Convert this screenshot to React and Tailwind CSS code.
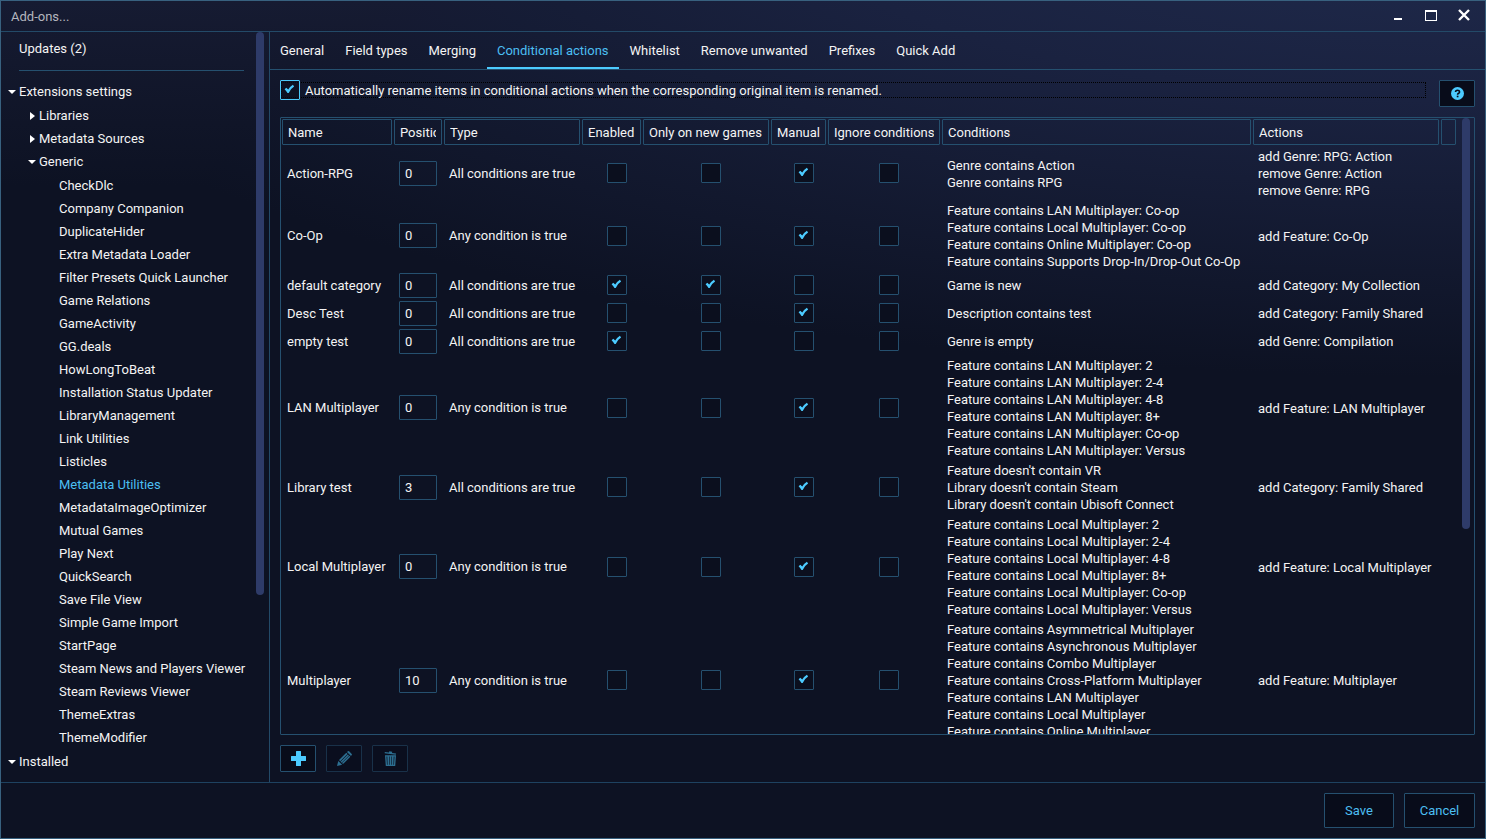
import React from "react";

const extensions = [
  "CheckDlc",
  "Company Companion",
  "DuplicateHider",
  "Extra Metadata Loader",
  "Filter Presets Quick Launcher",
  "Game Relations",
  "GameActivity",
  "GG.deals",
  "HowLongToBeat",
  "Installation Status Updater",
  "LibraryManagement",
  "Link Utilities",
  "Listicles",
  "Metadata Utilities",
  "MetadataImageOptimizer",
  "Mutual Games",
  "Play Next",
  "QuickSearch",
  "Save File View",
  "Simple Game Import",
  "StartPage",
  "Steam News and Players Viewer",
  "Steam Reviews Viewer",
  "ThemeExtras",
  "ThemeModifier",
];

const tabs = [
  "General",
  "Field types",
  "Merging",
  "Conditional actions",
  "Whitelist",
  "Remove unwanted",
  "Prefixes",
  "Quick Add",
];

const headers = [
  "Name",
  "Position",
  "Type",
  "Enabled",
  "Only on new games",
  "Manual",
  "Ignore conditions",
  "Conditions",
  "Actions",
  "",
];

const flagNames = ["Enabled", "Only on new games", "Manual", "Ignore conditions"];

const ALL = "All conditions are true";
const ANY = "Any condition is true";

const rows = [
  {
    name: "Action-RPG",
    position: 0,
    type: ALL,
    flags: [false, false, true, false],
    conditions: ["Genre contains Action", "Genre contains RPG"],
    actions: ["add Genre: RPG: Action", "remove Genre: Action", "remove Genre: RPG"],
  },
  {
    name: "Co-Op",
    position: 0,
    type: ANY,
    flags: [false, false, true, false],
    conditions: [
      "Feature contains LAN Multiplayer: Co-op",
      "Feature contains Local Multiplayer: Co-op",
      "Feature contains Online Multiplayer: Co-op",
      "Feature contains Supports Drop-In/Drop-Out Co-Op",
    ],
    actions: ["add Feature: Co-Op"],
  },
  {
    name: "default category",
    position: 0,
    type: ALL,
    flags: [true, true, false, false],
    conditions: ["Game is new"],
    actions: ["add Category: My Collection"],
  },
  {
    name: "Desc Test",
    position: 0,
    type: ALL,
    flags: [false, false, true, false],
    conditions: ["Description contains test"],
    actions: ["add Category: Family Shared"],
  },
  {
    name: "empty test",
    position: 0,
    type: ALL,
    flags: [true, false, false, false],
    conditions: ["Genre is empty"],
    actions: ["add Genre: Compilation"],
  },
  {
    name: "LAN Multiplayer",
    position: 0,
    type: ANY,
    flags: [false, false, true, false],
    conditions: [
      "Feature contains LAN Multiplayer: 2",
      "Feature contains LAN Multiplayer: 2-4",
      "Feature contains LAN Multiplayer: 4-8",
      "Feature contains LAN Multiplayer: 8+",
      "Feature contains LAN Multiplayer: Co-op",
      "Feature contains LAN Multiplayer: Versus",
    ],
    actions: ["add Feature: LAN Multiplayer"],
  },
  {
    name: "Library test",
    position: 3,
    type: ALL,
    flags: [false, false, true, false],
    conditions: [
      "Feature doesn't contain VR",
      "Library doesn't contain Steam",
      "Library doesn't contain Ubisoft Connect",
    ],
    actions: ["add Category: Family Shared"],
  },
  {
    name: "Local Multiplayer",
    position: 0,
    type: ANY,
    flags: [false, false, true, false],
    conditions: [
      "Feature contains Local Multiplayer: 2",
      "Feature contains Local Multiplayer: 2-4",
      "Feature contains Local Multiplayer: 4-8",
      "Feature contains Local Multiplayer: 8+",
      "Feature contains Local Multiplayer: Co-op",
      "Feature contains Local Multiplayer: Versus",
    ],
    actions: ["add Feature: Local Multiplayer"],
  },
  {
    name: "Multiplayer",
    position: 10,
    type: ANY,
    flags: [false, false, true, false],
    conditions: [
      "Feature contains Asymmetrical Multiplayer",
      "Feature contains Asynchronous Multiplayer",
      "Feature contains Combo Multiplayer",
      "Feature contains Cross-Platform Multiplayer",
      "Feature contains LAN Multiplayer",
      "Feature contains Local Multiplayer",
      "Feature contains Online Multiplayer",
    ],
    actions: ["add Feature: Multiplayer"],
  },
];

function Check({ bright, ...props }) {
  return (
    <span className="relative block size-5 shrink-0">
      <input
        type="checkbox"
        className={
          "peer block size-5 appearance-none rounded-[1px] border " +
          (bright ? "border-[#4cc9fa] bg-[#0b0f1e]/60" : "border-[#25506f] bg-[#0b0f1e]")
        }
        {...props}
      />
      <svg
        viewBox="0 0 20 20"
        className="pointer-events-none absolute inset-0 hidden size-5 fill-[#4ccbff] peer-checked:block"
        aria-hidden="true"
      >
        <path d="M4.6 9.200 6.300 7.700 8.200 9.600Q10.200 6.300 12.900 4.700L14.100 6.600Q10.700 8.700 8.700 12.900L7.500 13Q6.200 10.900 4.600 9.200Z" />
      </svg>
    </span>
  );
}

function Arrow({ open }) {
  return open ? (
    <svg viewBox="0 0 8 4" className="mt-px ml-px h-1 w-2 fill-white" aria-hidden="true">
      <path d="M0 0h8L4 4z" />
    </svg>
  ) : (
    <svg viewBox="0 0 5 8" className="ml-[3px] h-2 w-[5px] fill-white" aria-hidden="true">
      <path d="M0 0 5 4 0 8z" />
    </svg>
  );
}

function Branch({ open, children }) {
  return (
    <button type="button" aria-expanded={open} className="flex h-[23px] items-center text-left">
      <span className="flex w-3 justify-start">
        <Arrow open={open} />
      </span>
      {children}
    </button>
  );
}

function ToolButton({ label, disabled, children }) {
  return (
    <button
      type="button"
      aria-label={label}
      disabled={disabled}
      className="flex h-[27px] w-9 shrink-0 items-center justify-center rounded-[1px] border border-[#25506f] bg-[#080c1a] text-[#4ccbff] disabled:opacity-50"
    >
      {children}
    </button>
  );
}

export default function App() {
  return (
    <div className="flex h-screen flex-col border border-[#38617f] bg-[#0d1223] bg-[radial-gradient(ellipse_110%_60%_at_100%_-15%,#212d50_0%,#1a2240_45%,#0d1223_100%),linear-gradient(#161b32,#0d1223_22%)] bg-blend-lighten font-['Roboto','Noto_Sans',sans-serif] text-[13px] leading-[17px] text-[#f4f4f4]">
      <header className="flex h-[31px] shrink-0 items-center border-b border-[#234a68] pr-[15px] pl-[10px]">
        <h1 className="flex-1 text-[#b4b6be]">Add-ons...</h1>
        <div className="flex items-center gap-[21px] pb-[2px]">
          <button type="button" aria-label="Minimize">
            <svg viewBox="0 0 12 12" className="size-3 fill-white" aria-hidden="true">
              <path d="M2 9h8v2H2z" />
            </svg>
          </button>
          <button type="button" aria-label="Maximize">
            <svg viewBox="0 0 12 12" className="size-3 fill-white" aria-hidden="true">
              <path fillRule="evenodd" d="M0 1h12v11H0zM1 3v8h10V3z" />
            </svg>
          </button>
          <button type="button" aria-label="Close">
            <svg viewBox="0 0 12 12" className="size-3 stroke-white" aria-hidden="true">
              <path d="M1 1l10 10M11 1 1 11" strokeWidth="2.4" fill="none" />
            </svg>
          </button>
        </div>
      </header>

      <div className="flex min-h-0 flex-1">
        <aside className="flex w-[269px] shrink-0 border-r border-[#234a68]">
          <nav aria-label="Add-ons" className="flex min-w-0 flex-1 flex-col overflow-hidden">
            <a href="#updates" className="mt-2 ml-[18px]">
              Updates (2)
            </a>
            <hr className="mt-[13px] mr-3 ml-[18px] border-[#25506f]" />
            <div className="mt-[9px] flex flex-col gap-px pl-[6px]">
              <Branch open>Extensions settings</Branch>
              <div className="flex flex-col pl-5">
                <Branch open={false}>Libraries</Branch>
                <Branch open={false}>Metadata Sources</Branch>
                <Branch open>Generic</Branch>
                <ul className="pt-px pl-8">
                  {extensions.map((name) => (
                    <li key={name} className="h-[23px] leading-[23px] whitespace-nowrap">
                      <a
                        href={"#" + name}
                        className={name === "Metadata Utilities" ? "text-[#4cbff2]" : ""}
                      >
                        {name}
                      </a>
                    </li>
                  ))}
                </ul>
              </div>
              <Branch open>Installed</Branch>
            </div>
          </nav>
          <div className="mr-[5px] h-3/4 w-2 rounded-full bg-[#2e3b69]" />
        </aside>

        <main className="flex min-w-0 flex-1 flex-col">
          <div role="tablist" className="flex h-[38px] shrink-0 gap-px border-b border-[#25506f]">
            {tabs.map((tab) => {
              const active = tab === "Conditional actions";
              return (
                <button
                  key={tab}
                  type="button"
                  role="tab"
                  aria-selected={active}
                  className={
                    "border-b-2 px-[10px] pt-[2px] whitespace-nowrap " +
                    (active ? "border-[#4ccbff] text-[#4cbff2]" : "border-transparent")
                  }
                >
                  {tab}
                </button>
              );
            })}
          </div>

          <section className="flex min-h-0 flex-1 flex-col gap-[10px] p-[10px]">
            <div className="flex items-start gap-3">
              <label className="relative flex flex-1 items-center gap-[5px]">
                <span className="pointer-events-none absolute inset-x-px inset-y-[2px] border border-dotted border-black" />
                <Check bright defaultChecked />
                <span className="relative">
                  Automatically rename items in conditional actions when the corresponding original
                  item is renamed.
                </span>
              </label>
              <ToolButton label="Help">
                <svg viewBox="0 0 12 12" className="size-[13px]" aria-hidden="true">
                  <circle cx="6" cy="6" r="6" fill="#4ccbff" />
                  <path
                    d="M4.2 4.7Q4.2 3 6 3T7.9 4.5Q7.9 5.4 6.7 6Q6.1 6.3 6.1 7.1"
                    fill="none"
                    stroke="#080c1a"
                    strokeWidth="1.5"
                  />
                  <path d="M5.3 8h1.6v1.5H5.3z" fill="#080c1a" />
                </svg>
              </ToolButton>
            </div>

            <div className="flex min-h-0 flex-1 overflow-hidden rounded-[1px] border border-[#25506f]">
              <div className="min-w-0 flex-1 overflow-hidden">
                <table className="w-full table-fixed border-collapse">
                  <colgroup>
                    <col className="w-[112px]" />
                    <col className="w-[50px]" />
                    <col className="w-[138px]" />
                    <col className="w-[61px]" />
                    <col className="w-[128px]" />
                    <col className="w-[57px]" />
                    <col className="w-[114px]" />
                    <col />
                    <col className="w-[188px]" />
                    <col className="w-[17px]" />
                  </colgroup>
                  <thead>
                    <tr>
                      {headers.map((h, i) => (
                        <th key={i} scope="col" className="p-px text-left font-normal">
                          <div className="h-[26px] rounded-[1px] border border-[#25506f] px-[5px] pt-px">
                            <div className="overflow-hidden leading-6 whitespace-nowrap">{h}</div>
                          </div>
                        </th>
                      ))}
                    </tr>
                  </thead>
                  <tbody>
                    {rows.map((row) => (
                      <tr key={row.name} className="h-7">
                        <td className="py-0 pl-[6px] whitespace-nowrap">{row.name}</td>
                        <td className="py-0 pl-[6px]">
                          <input
                            type="text"
                            aria-label={"Position of " + row.name}
                            defaultValue={row.position}
                            className="block h-[25px] w-[38px] rounded-[1px] border border-[#25506f] bg-transparent px-[5px]"
                          />
                        </td>
                        <td className="py-0 pl-[6px] whitespace-nowrap">{row.type}</td>
                        {row.flags.map((flag, i) => (
                          <td key={i} className="py-0">
                            <div className="flex justify-center pl-[10px]">
                              <Check
                                defaultChecked={flag}
                                aria-label={flagNames[i] + ": " + row.name}
                              />
                            </div>
                          </td>
                        ))}
                        <td className="pt-[2px] pb-px pl-[6px] whitespace-nowrap">
                          {row.conditions.map((c) => (
                            <p key={c}>{c}</p>
                          ))}
                        </td>
                        <td className="pt-[2px] pb-px pl-[6px] whitespace-nowrap">
                          {row.actions.map((a) => (
                            <p key={a}>{a}</p>
                          ))}
                        </td>
                        <td />
                      </tr>
                    ))}
                  </tbody>
                </table>
              </div>
              <div className="mr-1 ml-[5px] h-2/3 w-2 rounded-full bg-[#2e3b69]" />
            </div>

            <div className="flex gap-[10px]">
              <ToolButton label="Add">
                <svg viewBox="0 0 15 15" className="size-[15px] fill-current" aria-hidden="true">
                  <path d="M5.5 0h4q.5 0 .5.5V5h4.500q.5 0 .5.5v4q0 .5-.5.5H10v4.500q0 .5-.5.5h-4q-.5 0-.5-.5V10H.5Q0 10 0 9.500v-4Q0 5 .5 5H5V.5Q5 0 5.500 0z" />
                </svg>
              </ToolButton>
              <ToolButton label="Edit" disabled>
                <svg viewBox="0 0 15 15" className="size-[15px] fill-current" aria-hidden="true">
                  <path d="M0 15 1.300 9.900 5.100 13.700zM2 9.100 9.300 1.800 10.500 3 3.200 10.300zM3.600 10.700 10.900 3.400 11.900 4.400 4.600 11.700zM5 12.100 12.300 4.800 13.300 5.800 6 13.100zM10 1.100 10.900.3Q11.500-.2 12.100.3L14.700 2.900Q15.200 3.500 14.700 4.100L14 5z" />
                </svg>
              </ToolButton>
              <ToolButton label="Delete" disabled>
                <svg viewBox="0 0 13 15" className="h-[15px] w-[13px] fill-current" aria-hidden="true">
                  <path d="M.8 1 5 1.500 5.300.3 8.200.7 8 1.900 12 2.500 11.800 3.700.7 2.200z" />
                  <path
                    fillRule="evenodd"
                    d="M1 4.200h11L11.200 15H1.800zM2.500 5.500 3 13.700h.6L3.300 5.500zM5 5.500v8.200h.6V5.500zM7.300 5.500v8.200H7.900V5.500zM9.700 5.500 9.400 13.700h.6l.5-8.200z"
                  />
                </svg>
              </ToolButton>
            </div>
          </section>
        </main>
      </div>

      <footer className="flex shrink-0 justify-end gap-[10px] border-t border-[#1e4260] p-[10px] text-[#4cbff2]">
        <button
          type="button"
          className="h-[35px] w-[70px] rounded-[1px] border border-[#25506f] bg-[#080c1a]"
        >
          Save
        </button>
        <button
          type="button"
          className="h-[35px] w-[71px] rounded-[1px] border border-[#25506f] bg-[#080c1a]"
        >
          Cancel
        </button>
      </footer>
    </div>
  );
}
